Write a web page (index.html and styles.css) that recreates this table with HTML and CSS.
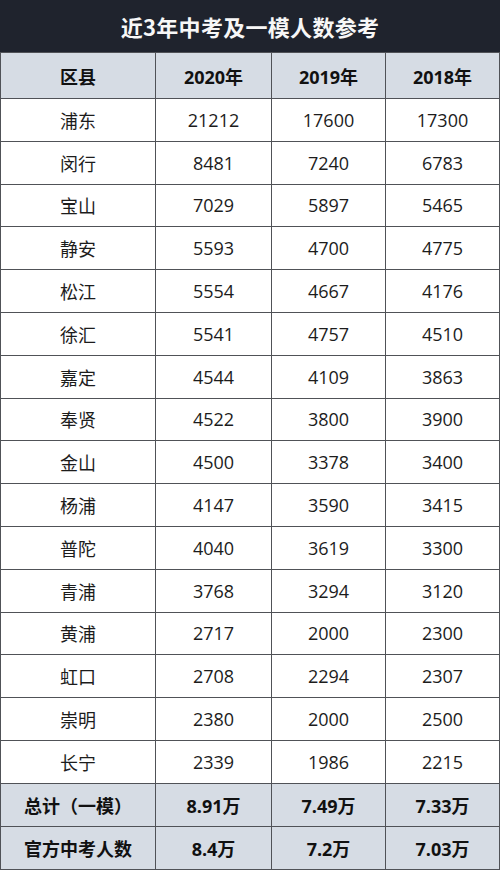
FILE: index.html
```html
<!DOCTYPE html>
<html lang="zh-CN">
<head>
<meta charset="utf-8">
<title>近3年中考及一模人数参考</title>
<link rel="stylesheet" href="styles.css">
</head>
<body>
<div class="page">
  <div class="title">近3年中考及一模人数参考</div>
  <div class="grid">
    <div class="cell head">区县</div><div class="cell head">2020年</div><div class="cell head">2019年</div><div class="cell head">2018年</div>
    <div class="cell">浦东</div><div class="cell">21212</div><div class="cell">17600</div><div class="cell">17300</div>
    <div class="cell">闵行</div><div class="cell">8481</div><div class="cell">7240</div><div class="cell">6783</div>
    <div class="cell">宝山</div><div class="cell">7029</div><div class="cell">5897</div><div class="cell">5465</div>
    <div class="cell">静安</div><div class="cell">5593</div><div class="cell">4700</div><div class="cell">4775</div>
    <div class="cell">松江</div><div class="cell">5554</div><div class="cell">4667</div><div class="cell">4176</div>
    <div class="cell">徐汇</div><div class="cell">5541</div><div class="cell">4757</div><div class="cell">4510</div>
    <div class="cell">嘉定</div><div class="cell">4544</div><div class="cell">4109</div><div class="cell">3863</div>
    <div class="cell">奉贤</div><div class="cell">4522</div><div class="cell">3800</div><div class="cell">3900</div>
    <div class="cell">金山</div><div class="cell">4500</div><div class="cell">3378</div><div class="cell">3400</div>
    <div class="cell">杨浦</div><div class="cell">4147</div><div class="cell">3590</div><div class="cell">3415</div>
    <div class="cell">普陀</div><div class="cell">4040</div><div class="cell">3619</div><div class="cell">3300</div>
    <div class="cell">青浦</div><div class="cell">3768</div><div class="cell">3294</div><div class="cell">3120</div>
    <div class="cell">黄浦</div><div class="cell">2717</div><div class="cell">2000</div><div class="cell">2300</div>
    <div class="cell">虹口</div><div class="cell">2708</div><div class="cell">2294</div><div class="cell">2307</div>
    <div class="cell">崇明</div><div class="cell">2380</div><div class="cell">2000</div><div class="cell">2500</div>
    <div class="cell">长宁</div><div class="cell">2339</div><div class="cell">1986</div><div class="cell">2215</div>
    <div class="cell total">总计（一模）</div><div class="cell total">8.91万</div><div class="cell total">7.49万</div><div class="cell total">7.33万</div>
    <div class="cell total">官方中考人数</div><div class="cell total">8.4万</div><div class="cell total">7.2万</div><div class="cell total">7.03万</div>
  </div>
</div>
</body>
</html>
```
FILE: styles.css
```css
html, body {
  margin: 0;
  padding: 0;
  background: #ffffff;
}
.page {
  width: 500px;
  height: 870px;
  overflow: hidden;
  font-family: "Open Sans", "Noto Sans CJK SC", sans-serif;
}
.title {
  height: 52px;
  background: #1f232d;
  color: #f7f7f7;
  font-family: "Noto Sans CJK SC", sans-serif;
  font-weight: 700;
  font-size: 22px;
  display: flex;
  align-items: center;
  justify-content: center;
  letter-spacing: 0.3px;
}
.grid {
  display: grid;
  grid-template-columns: 154px 115px 113px 113px;
  grid-template-rows: 45px repeat(16, 41.8px) repeat(2, 42px);
  gap: 1px;
  padding: 1px;
  background: #505257;
}
.cell {
  background: #ffffff;
  display: flex;
  align-items: center;
  justify-content: center;
  font-size: 18px;
  color: #1c1c1c;
}
.head {
  background: #d6dce4;
  font-weight: 700;
  color: #111111;
}
.total {
  background: #d6dce4;
  font-weight: 700;
  color: #111111;
}
```
